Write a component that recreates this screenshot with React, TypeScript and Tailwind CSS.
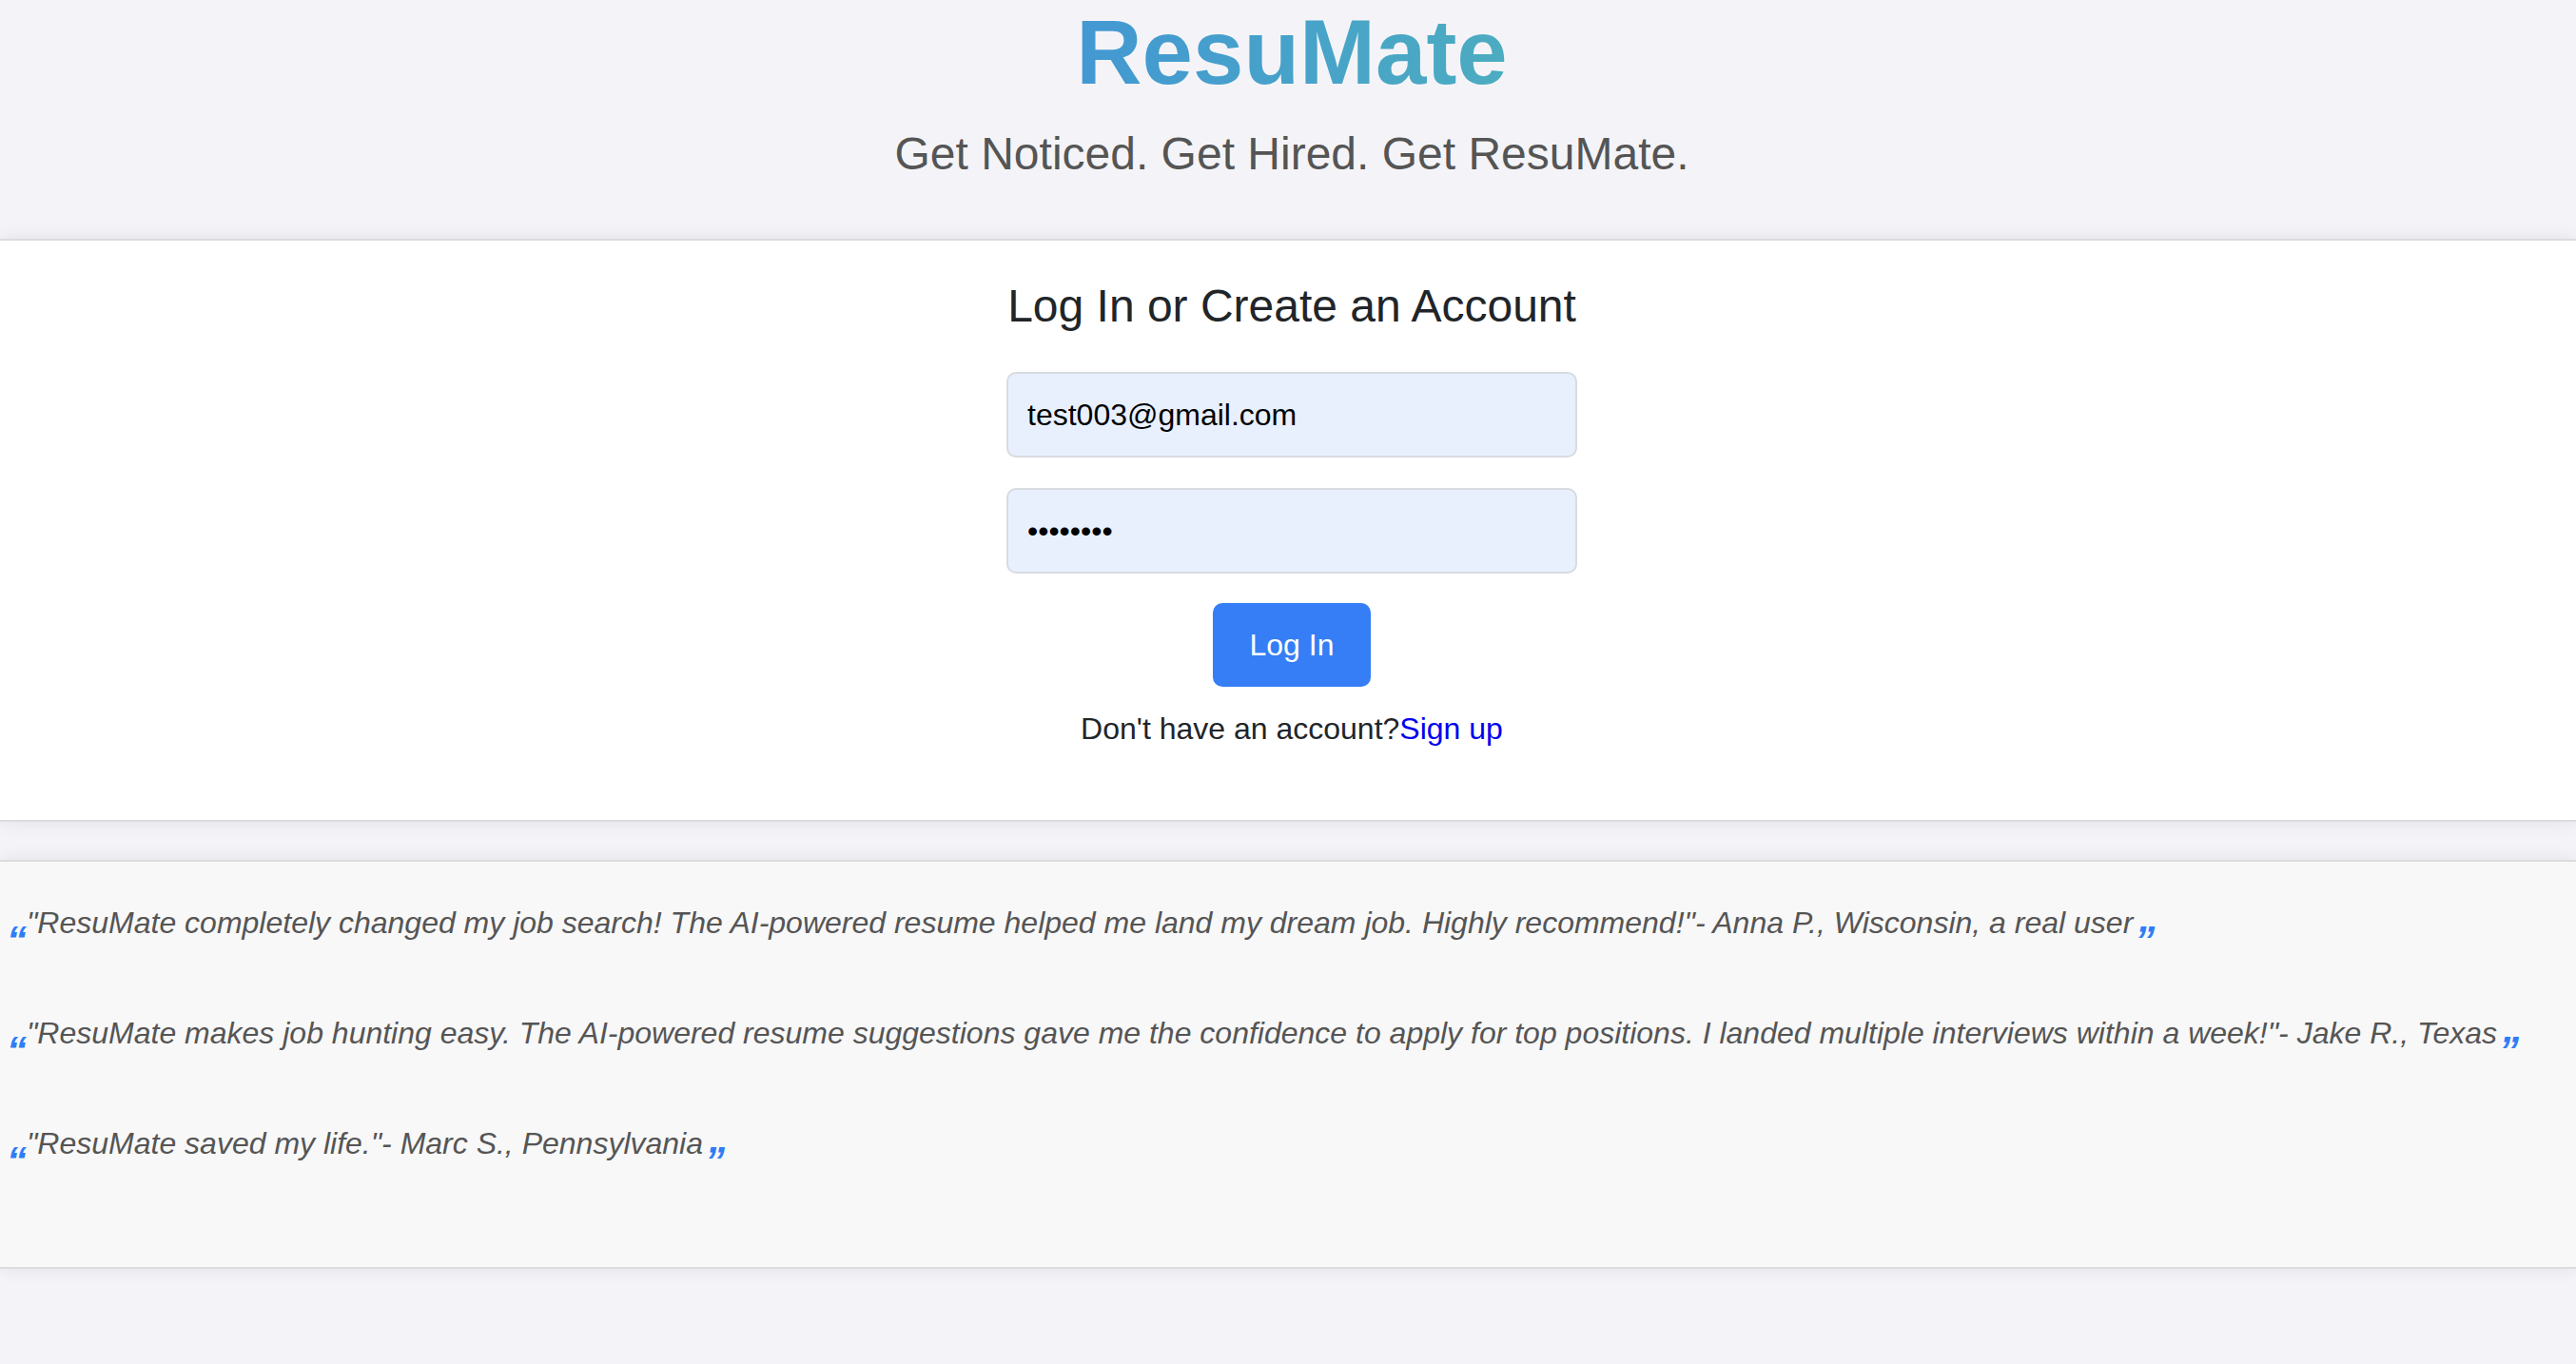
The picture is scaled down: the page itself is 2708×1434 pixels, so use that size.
import React from "react";

function Testimonial({ text }: { text: string }) {
  return (
    <p className="text-[32px] leading-[36px] italic text-[#555555] whitespace-nowrap">
      <span className="inline-block leading-[0] text-[42px] font-bold text-[#2f7df6] translate-y-[22px]">“</span>
      {text}
      <span className="inline-block ml-[2px] leading-[0] text-[42px] font-bold text-[#2f7df6] translate-y-[22px]">”</span>
    </p>
  );
}

export default function App() {
  return (
    <div className="min-h-screen bg-[#f4f4f8] font-['Liberation_Sans',Arial,sans-serif]">
      <header className="flex flex-col items-center pl-2 pb-[62px]">
        <h1 className="text-[96px] font-bold leading-[110px] bg-linear-to-r from-[#4398d2] to-[#4cacc0] bg-clip-text text-transparent">
          ResuMate
        </h1>
        <p className="mt-[24px] text-[48px] leading-[55px] text-[#555555]">
          Get Noticed. Get Hired. Get ResuMate.
        </p>
      </header>

      <section className="flex flex-col items-center bg-white border-y-2 border-[#dcdcdf] shadow-[0_0_18px_rgba(0,0,0,0.08)] pl-2 pt-[41px] pb-[78px]">
        <h2 className="text-[48px] leading-[55px] text-[#212529]">Log In or Create an Account</h2>
        <input
          type="email"
          readOnly
          value="test003@gmail.com"
          className="mt-[42px] w-[600px] h-[90px] rounded-[10px] border-2 border-[#d8dbe0] bg-[#e8f0fe] px-[20px] text-[32px] text-black outline-none"
        />
        <input
          type="password"
          readOnly
          value="password"
          className="mt-[32px] w-[600px] h-[90px] rounded-[10px] border-2 border-[#d8dbe0] bg-[#e8f0fe] px-[20px] text-[32px] text-black outline-none"
        />
        <button className="mt-[31px] h-[88px] px-[39px] rounded-[10px] bg-[#357ef5] text-white text-[32px] leading-[36px]">
          Log In
        </button>
        <p className="mt-[26px] text-[32px] leading-[36px] text-[#212529]">
          Don't have an account?<a className="text-[#0000ee] cursor-pointer">Sign up</a>
        </p>
      </section>

      <section className="mt-[40px] flex flex-col gap-[80px] bg-[#f8f8f8] border-y-2 border-[#dcdcdf] shadow-[0_0_18px_rgba(0,0,0,0.08)] px-[7px] pt-[46px] pb-[112px]">
        <Testimonial text={'"ResuMate completely changed my job search! The AI-powered resume helped me land my dream job. Highly recommend!"- Anna P., Wisconsin, a real user'} />
        <Testimonial text={'"ResuMate makes job hunting easy. The AI-powered resume suggestions gave me the confidence to apply for top positions. I landed multiple interviews within a week!"- Jake R., Texas'} />
        <Testimonial text={'"ResuMate saved my life."- Marc S., Pennsylvania'} />
      </section>
    </div>
  );
}
